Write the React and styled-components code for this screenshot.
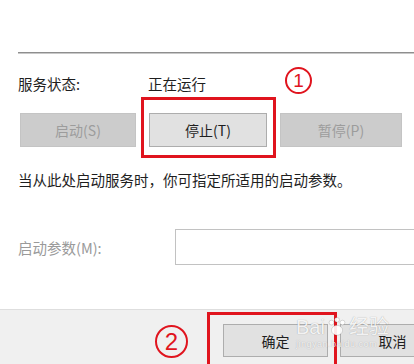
import styled, { createGlobalStyle } from "styled-components";

const GlobalStyle = createGlobalStyle`
  html, body {
    margin: 0;
    padding: 0;
    background: #ffffff;
    overflow: hidden;
  }
  * {
    box-sizing: border-box;
  }
`;

const RED = "#e0141e";

const App = () => {
  return (
    <Page>
      <GlobalStyle />
      <Main>
        <Divider />
        <StatusRow>
          <Label>服务状态:</Label>
          <Value>正在运行</Value>
          <Marker size={27} top={-3} left={137}>
            1
          </Marker>
        </StatusRow>
        <ButtonRow>
          <Button width={116} disabled>
            启动(S)
          </Button>
          <Highlight top={16} right={9} bottom={11} left={8}>
            <Button width={118}>停止(T)</Button>
          </Highlight>
          <Button width={122} disabled>
            暂停(P)
          </Button>
        </ButtonRow>
        <Description>当从此处启动服务时，你可指定所适用的启动参数。</Description>
        <ParamRow>
          <Label muted>启动参数(M):</Label>
          <Input />
        </ParamRow>
      </Main>
      <Footer>
        <FooterMarker>2</FooterMarker>
        <Highlight top={12} right={9} bottom={14} left={16}>
          <Button width={105} height={33}>
            确定
          </Button>
        </Highlight>
        <Button width={105} height={33}>
          取消
        </Button>
        <Watermark>
          <WatermarkMain>
            Bai
            <Paw viewBox="0 0 20 20">
              <circle cx="5" cy="6" r="2.2" />
              <circle cx="10" cy="3.5" r="2.2" />
              <circle cx="15" cy="6" r="2.2" />
              <ellipse cx="10" cy="13" rx="5" ry="4.5" />
            </Paw>
            经验
          </WatermarkMain>
          <WatermarkSub>jingyan.baidu.com</WatermarkSub>
        </Watermark>
      </Footer>
    </Page>
  );
};

const Page = styled.div`
  position: relative;
  width: 414px;
  height: 364px;
  overflow: hidden;
  display: flex;
  flex-direction: column;
  font-family: "Noto Sans CJK SC", "Liberation Sans", sans-serif;
  color: #1e1e1e;
`;

const Main = styled.div`
  padding: 52px 0 0 18px;
  display: flex;
  flex-direction: column;
`;

const Divider = styled.div`
  height: 2px;
  border-top: 1px solid #8e8e8e;
  border-bottom: 1px solid #c8c8c8;
`;

const StatusRow = styled.div`
  position: relative;
  margin-top: 16px;
  height: 26px;
  display: flex;
  align-items: center;
`;

const Label = styled.span`
  width: 130px;
  font-size: 14.5px;
  color: ${(p) => (p.muted ? "#9a9a9a" : "#1e1e1e")};
  flex-shrink: 0;
  white-space: nowrap;
`;

const Value = styled.span`
  font-size: 14.5px;
`;

const Marker = styled.span`
  position: absolute;
  top: ${(p) => p.top}px;
  left: calc(130px + ${(p) => p.left}px);
  width: ${(p) => p.size}px;
  height: ${(p) => p.size}px;
  border: 2px solid ${RED};
  border-radius: 50%;
  color: ${RED};
  font-family: "Liberation Sans", sans-serif;
  font-size: ${(p) => Math.round(p.size * 0.72)}px;
  line-height: 1;
  display: flex;
  align-items: center;
  justify-content: center;
`;

const ButtonRow = styled.div`
  margin-top: 17px;
  padding-left: 2px;
  display: flex;
  gap: 13px;
`;

const Button = styled.button`
  width: ${(p) => p.width}px;
  height: ${(p) => p.height || 34}px;
  flex-shrink: 0;
  padding: 0;
  font-family: inherit;
  font-size: 14px;
  border: 1px solid ${(p) => (p.disabled ? "#c4c4c4" : "#adadad")};
  background: ${(p) => (p.disabled ? "#cccccc" : "#e1e1e1")};
  color: ${(p) => (p.disabled ? "#9c9c9c" : "#1e1e1e")};
`;

const Highlight = styled.span`
  position: relative;
  display: inline-flex;

  &::after {
    content: "";
    position: absolute;
    top: -${(p) => p.top}px;
    right: -${(p) => p.right}px;
    bottom: -${(p) => p.bottom}px;
    left: -${(p) => p.left}px;
    border: 3px solid ${RED};
    pointer-events: none;
  }
`;

const Description = styled.p`
  margin: 23px 0 0;
  font-size: 14.5px;
  line-height: 20px;
  white-space: nowrap;
`;

const ParamRow = styled.div`
  margin-top: 39px;
  display: flex;
  align-items: center;
  gap: 27px;
`;

const Input = styled.div`
  width: 260px;
  height: 36px;
  flex-shrink: 0;
  border: 1px solid #c2c2c2;
  background: #fff;
`;

const Footer = styled.div`
  position: relative;
  margin-top: auto;
  height: 55px;
  border-top: 1px solid #dedede;
  background: #f0f0f0;
  display: flex;
  align-items: flex-start;
  padding: 14px 0 0 155px;
  gap: 12px;

  & > ${Highlight} {
    margin-left: 23px;
  }
`;

const FooterMarker = styled.span`
  width: 33px;
  height: 33px;
  margin-top: 1px;
  flex-shrink: 0;
  border: 2px solid ${RED};
  border-radius: 50%;
  color: ${RED};
  font-family: "Liberation Sans", sans-serif;
  font-size: 24px;
  line-height: 1;
  display: flex;
  align-items: center;
  justify-content: center;
`;

const Watermark = styled.div`
  position: absolute;
  left: 296px;
  top: 5px;
  display: flex;
  flex-direction: column;
  pointer-events: none;
`;

const WatermarkMain = styled.div`
  display: flex;
  align-items: center;
  font-family: "Liberation Sans", "Noto Sans CJK SC", sans-serif;
  font-size: 20px;
  line-height: 24px;
  color: rgba(255, 255, 255, 0.9);
  text-shadow: 0 0 1px rgba(0, 0, 0, 0.35);
`;

const Paw = styled.svg`
  width: 22px;
  height: 22px;
  margin: 0 1px;
  fill: rgba(255, 255, 255, 0.9);
  stroke: rgba(0, 0, 0, 0.2);
  stroke-width: 0.6;
`;

const WatermarkSub = styled.div`
  font-family: "Liberation Sans", sans-serif;
  font-size: 9px;
  color: rgba(255, 255, 255, 0.85);
  text-shadow: 0 0 1px rgba(0, 0, 0, 0.3);
  letter-spacing: 0.5px;
`;

export default App;
